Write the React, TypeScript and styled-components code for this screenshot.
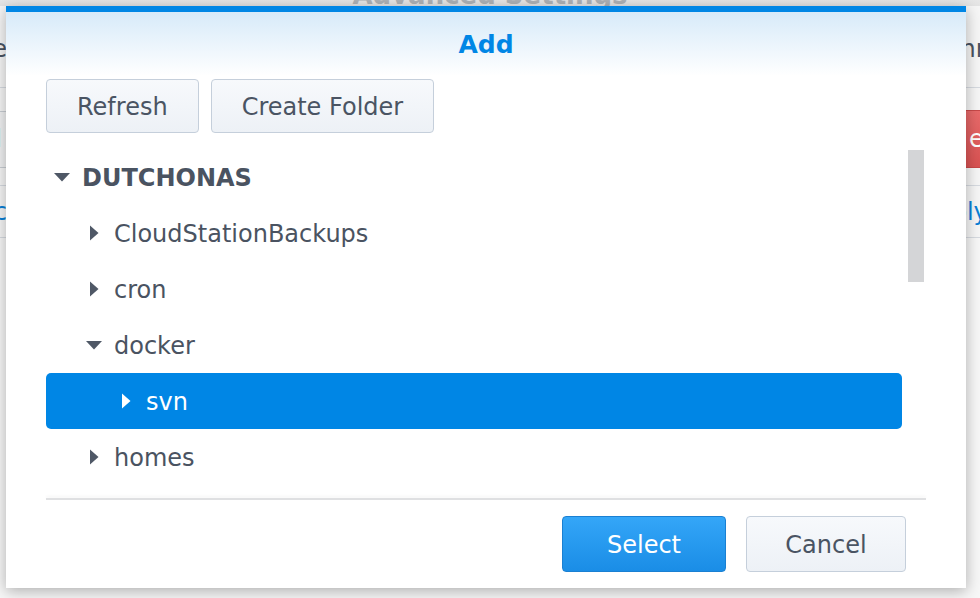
import React from 'react'
import styled, { createGlobalStyle } from 'styled-components'

type Node = {
  label: string
  level: number
  open?: boolean
  root?: boolean
  selected?: boolean
}

const nodes: Node[] = [
  { label: 'DUTCHONAS', level: 0, open: true, root: true },
  { label: 'CloudStationBackups', level: 1 },
  { label: 'cron', level: 1 },
  { label: 'docker', level: 1, open: true },
  { label: 'svn', level: 2, selected: true },
  { label: 'homes', level: 1 },
  { label: 'music', level: 1 },
  { label: 'photo', level: 1 },
  { label: 'video', level: 1 },
  { label: 'web', level: 1 },
]

const Caret = ({ open, color }: { open?: boolean; color: string }) => (
  <Tree.Caret width="16" height="16" viewBox="0 0 16 16">
    {open ? (
      <polygon points="0,4 16,4 8,12.5" fill={color} />
    ) : (
      <polygon points="4,0.5 12.5,8 4,15.5" fill={color} />
    )}
  </Tree.Caret>
)

const App = () => {
  return (
    <Stage>
      <GlobalStyle />

      <Backdrop.Window>
        <Backdrop.Title>Advanced Settings</Backdrop.Title>
        <Backdrop.Row $height={82} $align="flex-end" $pad="0 0 24px">
          <Backdrop.Left>
            <Backdrop.Label>Name</Backdrop.Label>
          </Backdrop.Left>
          <Backdrop.Right $width={51}>
            <Backdrop.Label>Connection</Backdrop.Label>
          </Backdrop.Right>
        </Backdrop.Row>
        <Backdrop.Row $height={98} $align="center" $pad="5px 0 0">
          <Backdrop.Left>
            <Backdrop.Field>
              <Backdrop.Label>url</Backdrop.Label>
            </Backdrop.Field>
          </Backdrop.Left>
          <Backdrop.Right $width={15}>
            <Backdrop.Danger>e</Backdrop.Danger>
          </Backdrop.Right>
        </Backdrop.Row>
        <Backdrop.Row $height={52} $align="center" $pad="0">
          <Backdrop.Left>
            <Backdrop.Link>Sync</Backdrop.Link>
          </Backdrop.Left>
          <Backdrop.Right $width={60}>
            <Backdrop.Link>Apply</Backdrop.Link>
          </Backdrop.Right>
        </Backdrop.Row>
      </Backdrop.Window>

      <Dialog.Wrapper>
        <Dialog.Bar />
        <Dialog.Header>
          <Dialog.Title>Add</Dialog.Title>
        </Dialog.Header>

        <Dialog.Body>
          <Dialog.Toolbar>
            <Button>Refresh</Button>
            <Button>Create Folder</Button>
          </Dialog.Toolbar>

          <Tree.Viewport>
            <Tree.List>
              {nodes.map((n) => (
                <Tree.Row key={n.label} $level={n.level} $selected={n.selected}>
                  <Caret open={n.open} color={n.selected ? '#ffffff' : '#4f5866'} />
                  <Tree.Label $root={n.root}>{n.label}</Tree.Label>
                </Tree.Row>
              ))}
            </Tree.List>
            <Tree.Track>
              <Tree.Thumb />
            </Tree.Track>
          </Tree.Viewport>
          <Dialog.Divider />
        </Dialog.Body>

        <Dialog.Footer>
          <Button $primary $width={164}>Select</Button>
          <Button $width={160}>Cancel</Button>
        </Dialog.Footer>
      </Dialog.Wrapper>
    </Stage>
  )
}

const font = `"DejaVu Sans", Verdana, sans-serif`

const Stage = styled.div`
  position: relative;
  width: 980px;
  height: 598px;
  overflow: hidden;
  background: #f7f7f7;
  font-family: ${font};
`

const Backdrop = {
  Window: styled.div`
    display: flex;
    flex-direction: column;
    margin-top: -16px;
    background: #f6f6f6;
  `,
  Title: styled.div`
    height: 22px;
    line-height: 22px;
    text-align: center;
    font-size: 26px;
    font-weight: bold;
    color: #aeb2b7;
    background: linear-gradient(#eeeeee, #e4e4e4);
  `,
  Row: styled.div<{ $height: number; $align: string; $pad: string }>`
    height: ${(p) => p.$height}px;
    box-sizing: border-box;
    padding: ${(p) => p.$pad};
    display: flex;
    justify-content: space-between;
    align-items: ${(p) => p.$align};
    border-bottom: 1px solid #d6dae0;
  `,
  Left: styled.div`
    width: 7px;
    display: flex;
    justify-content: flex-end;
    overflow: hidden;
  `,
  Right: styled.div<{ $width: number }>`
    width: ${(p) => p.$width}px;
    display: flex;
    justify-content: flex-start;
    overflow: hidden;
  `,
  Label: styled.span`
    font-size: 24px;
    line-height: 28px;
    color: #4a5361;
    white-space: nowrap;
  `,
  Link: styled.span`
    font-size: 24px;
    line-height: 28px;
    color: #0a7fd6;
    white-space: nowrap;
  `,
  Field: styled.div`
    flex: none;
    display: flex;
    align-items: center;
    height: 55px;
    padding: 0 4px 0 40px;
    border: 1px solid #c8cdd3;
    background: #f0f1f2;
  `,
  Danger: styled.div`
    flex: none;
    height: 56px;
    padding: 0 20px 0 4px;
    display: flex;
    align-items: center;
    border-radius: 0 4px 4px 0;
    font-size: 24px;
    color: #ffffff;
    background: linear-gradient(#e86a6a, #d85252);
    border: 1px solid #c84848;
    border-left: none;
  `,
}

const Dialog = {
  Wrapper: styled.div`
    position: absolute;
    left: 6px;
    top: 6px;
    width: 960px;
    height: 582px;
    display: flex;
    flex-direction: column;
    background: #ffffff;
    box-shadow: 0 3px 14px rgba(0, 0, 0, 0.3);
  `,
  Bar: styled.div`
    height: 6px;
    background: #0086e5;
  `,
  Header: styled.div`
    height: 64px;
    display: flex;
    align-items: center;
    justify-content: center;
    background: linear-gradient(#d7eaf9, #ffffff);
  `,
  Title: styled.h1`
    margin: 0;
    font-size: 25px;
    font-weight: bold;
    color: #0086e5;
  `,
  Body: styled.div`
    display: flex;
    flex-direction: column;
    padding: 0 40px;
  `,
  Toolbar: styled.div`
    display: flex;
    gap: 12px;
    margin-top: 3px;
    margin-bottom: 16px;
  `,
  Divider: styled.div`
    height: 2px;
    background: #dfe0e2;
    box-shadow: 0 -2px 3px rgba(0, 0, 0, 0.04);
  `,
  Footer: styled.div`
    display: flex;
    justify-content: flex-end;
    gap: 20px;
    padding: 16px 60px 16px;
  `,
}

const Button = styled.button<{ $primary?: boolean; $width?: number }>`
  height: ${(p) => (p.$width ? 56 : 54)}px;
  ${(p) => (p.$width ? `width: ${p.$width}px; padding: 2px 0 0;` : 'padding: 2px 30px 0;')}
  box-sizing: border-box;
  border-radius: 4px;
  font-family: ${font};
  font-size: 24px;
  border: 1px solid ${(p) => (p.$primary ? '#1a80d2' : '#c5cfdb')};
  color: ${(p) => (p.$primary ? '#ffffff' : '#4a5463')};
  background: ${(p) =>
    p.$primary
      ? 'linear-gradient(#34a6f8, #1a8de6)'
      : 'linear-gradient(#f7f9fc, #edf1f6)'};
  cursor: pointer;
`

const Tree = {
  Viewport: styled.div`
    height: 349px;
    display: flex;
    overflow: hidden;
  `,
  List: styled.div`
    flex: 1;
    display: flex;
    flex-direction: column;
  `,
  Row: styled.div<{ $level: number; $selected?: boolean }>`
    flex: none;
    height: 56px;
    display: flex;
    align-items: center;
    gap: 12px;
    padding-left: ${(p) => 8 + p.$level * 32}px;
    border-radius: 5px;
    color: ${(p) => (p.$selected ? '#ffffff' : '#4a5361')};
    background: ${(p) => (p.$selected ? '#0086e5' : 'transparent')};
  `,
  Caret: styled.svg`
    flex: none;
    display: block;
  `,
  Label: styled.span<{ $root?: boolean }>`
    padding-top: 2px;
    font-size: 24px;
    font-weight: ${(p) => (p.$root ? 'bold' : 'normal')};
    white-space: nowrap;
  `,
  Track: styled.div`
    width: 16px;
    margin: 0 2px 0 6px;
  `,
  Thumb: styled.div`
    height: 132px;
    margin-top: 1px;
    background: #d4d5d7;
  `,
}

const GlobalStyle = createGlobalStyle`
  html, body {
    margin: 0;
    padding: 0;
    background: #f7f7f7;
  }
`

export default App
